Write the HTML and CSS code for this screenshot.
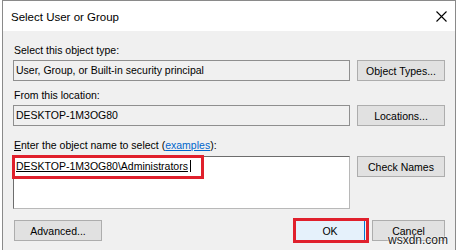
FILE: index.html
```html
<!DOCTYPE html>
<html lang="en">
<head>
  <meta charset="UTF-8" />
  <title>Select User or Group</title>
  <link rel="stylesheet" href="styles.css">
</head>
<body>

  <div class="dialog">
    <div class="titlebar">
      <span class="title">Select User or Group</span>
      <svg class="close" width="11" height="11" viewBox="0 0 11 11">
        <path d="M0.5 0.5 L10.5 10.5 M10.5 0.5 L0.5 10.5" stroke="#000" stroke-width="1.1" fill="none" />
      </svg>
    </div>

    <div class="content">
      <div class="label">Select this object type:</div>
      <div class="row">
        <div class="field readonly">User, Group, or Built-in security principal</div>
        <button class="btn">Object Types...</button>
      </div>

      <div class="label second">From this location:</div>
      <div class="row">
        <div class="field readonly">DESKTOP-1M3OG80</div>
        <button class="btn">Locations...</button>
      </div>

      <div class="label third"><u>E</u>nter the object name to select (<a href="#" class="link">examples</a>):</div>
      <div class="row">
        <div class="field names">
          <span class="resolved">DESKTOP-1M3OG80\Administrators</span><span class="caret"></span>
          <div class="marker name-marker"></div>
        </div>
        <button class="btn">Check Names</button>
      </div>

      <div class="footer">
        <button class="btn advanced">Advanced...</button>
        <div class="actions">
          <button class="btn ok">OK<span class="marker ok-marker"></span></button>
          <button class="btn cancel">Cancel</button>
        </div>
      </div>
    </div>
  </div>

  <div class="watermark">wsxdn.com</div>

</body>
</html>
```

FILE: styles.css
```css
* {
  box-sizing: border-box;
}
body {
  margin: 0;
  width: 459px;
  height: 250px;
  overflow: hidden;
  background: #ffffff;
  font-family: 'Liberation Sans', Arial, sans-serif;
  font-size: 10.5px;
  color: #000;
  position: relative;
}

.dialog {
  margin-left: 2px;
  width: 454px;
  height: 260px;
  border: 1px solid #8a8a8a;
  border-bottom: none;
  background: #f0f0f0;
}

.titlebar {
  height: 30px;
  background: #ffffff;
  display: flex;
  align-items: center;
  justify-content: space-between;
  padding: 0 8px 0 8px;
}
.title {
  font-size: 11.5px;
  padding-top: 1px;
}
.close {
  margin-right: 0;
}

.content {
  padding: 13px 0 0 10px;
}

.label {
  height: 13px;
  line-height: 13px;
  padding-left: 1px;
  margin-bottom: 3px;
}
.label.second {
  margin-top: 8px;
}
.label.third {
  margin-top: 13px;
  margin-bottom: 4px;
}
.link {
  color: #0066cc;
}

.row {
  display: flex;
  align-items: flex-start;
  gap: 7px;
}

.field {
  width: 337px;
  height: 21px;
  border: 1px solid #8f8f8f;
  padding: 0 2px;
  line-height: 19px;
  white-space: nowrap;
}
.field.readonly {
  background: #f0f0f0;
}
.field.names {
  position: relative;
  height: 53px;
  background: #ffffff;
  border-color: #6d6d6d #b8b8b8 #b8b8b8 #6d6d6d;
  line-height: 15px;
  padding-top: 2px;
}
.resolved {
  text-decoration: underline;
}
.caret {
  display: inline-block;
  width: 1px;
  height: 12px;
  background: #000;
  margin-left: 2px;
  vertical-align: -2px;
}

.btn {
  width: 88px;
  height: 21px;
  padding: 0;
  background: #e1e1e1;
  border: 1px solid #adadad;
  font-family: inherit;
  font-size: 10.5px;
  color: #000;
}

.footer {
  display: flex;
  justify-content: space-between;
  width: 432px;
  margin-top: 11px;
  padding-left: 1px;
}
.actions {
  display: flex;
  gap: 7px;
}
.btn.advanced {
  width: 88px;
}
.btn.ok {
  position: relative;
  width: 70px;
  background: #e5f1fb;
  border-color: #0078d7;
}
.btn.cancel {
  width: 73px;
}

.marker {
  position: absolute;
  border: 3px solid #e0202c;
}
.name-marker {
  left: -2px;
  top: -2px;
  width: 192px;
  height: 24px;
}
.ok-marker {
  left: -3px;
  top: -3px;
  width: 76px;
  height: 25px;
}

.watermark {
  position: absolute;
  right: 11px;
  bottom: 3px;
  font-size: 12px;
  color: #222;
  text-shadow: 0 0 2px #fff, 0 0 2px #fff;
}
```
